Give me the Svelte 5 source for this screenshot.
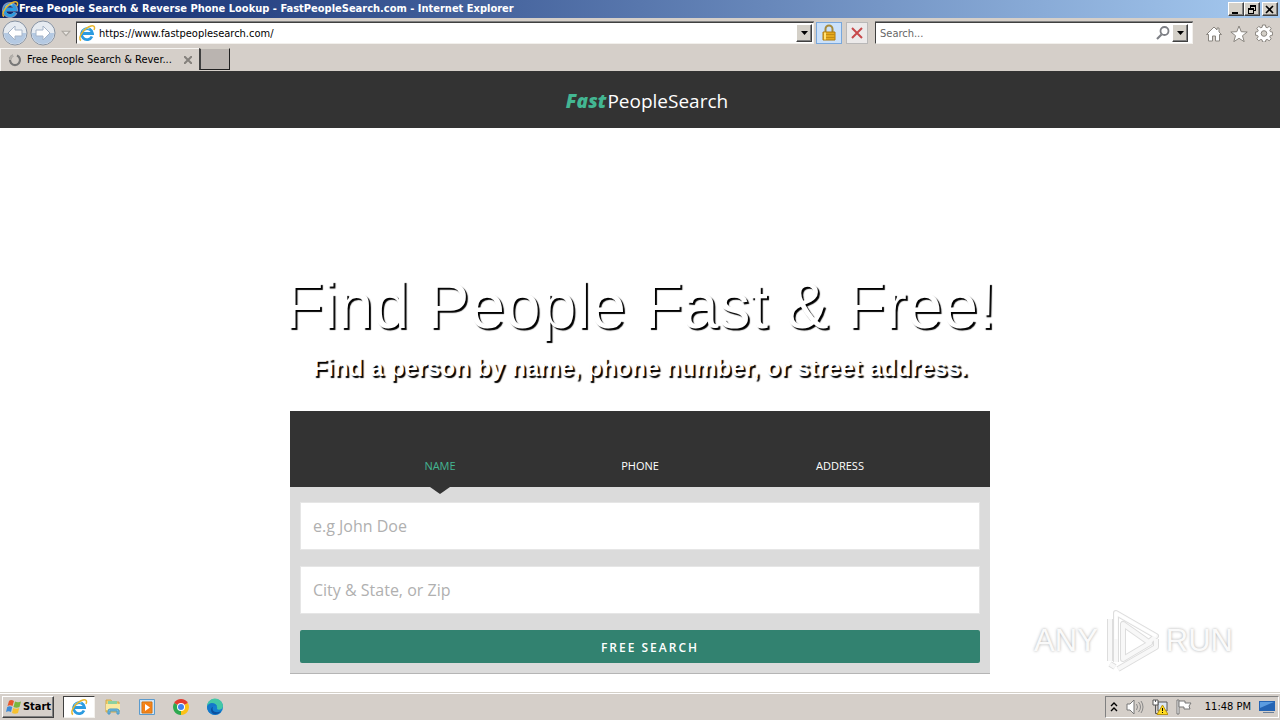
<script lang="ts">
    const tabs = ['Name', 'Phone', 'Address'];

    let active = $state('Name');
    let address = $state('https://www.fastpeoplesearch.com/');
    let query = $state('');
    let person = $state('');
    let place = $state('');
</script>

<svelte:head><title>Free People Search & Reverse Phone Lookup</title></svelte:head>

{#snippet ie()}
    <svg class="ie" viewBox="0 0 18 18" aria-hidden="true">
        <path d="M14.500 12.500A6 6 0 1 1 15 9.500H5" fill="none" stroke="#fff" stroke-width="4" opacity=".5" />
        <path d="M14 12.500A5.500 5.500 0 1 1 14.500 9.500H5" fill="none" stroke="#2b9be0" stroke-width="2.800" />
        <path d="M4.500 7.500a5 5 0 0 1 7-2.500" fill="none" stroke="#8fd6f8" stroke-width="1.200" />
        <path d="M3 16.500C-1 14 6 4 13 2c4-1 4 2 3 4" fill="none" stroke="#e8b62c" stroke-width="1.500" />
    </svg>
{/snippet}

{#snippet arrow()}
    <svg viewBox="0 0 9 5" width="9" height="5" aria-hidden="true"><path d="M1 0h7L4.500 4z" fill="#000" /></svg>
{/snippet}

<div class="desktop">
    <div class="titlebar">
        {@render ie()}
        <span class="title">Free People Search & Reverse Phone Lookup - FastPeopleSearch.com - Internet Explorer</span>
        <div class="window-buttons">
            <button aria-label="Minimize"><svg viewBox="0 0 10 9"><path d="M1 7h6v2H1z" /></svg></button>
            <button aria-label="Restore"><svg viewBox="0 0 10 9"><path d="M3 0h6v6H7V5h1V2H4v1H3zM1 3h6v6H1zm1 2v3h4V5z" fill-rule="evenodd" /></svg></button>
            <button class="close" aria-label="Close"><svg viewBox="0 0 10 9"><path d="M1 1l7 7M8 1L1 8" stroke="#000" stroke-width="1.600" /></svg></button>
        </div>
    </div>

    <div class="navbar">
        <div class="history">
            <button aria-label="Back">
                <svg viewBox="0 0 26 26"><circle cx="13" cy="13" r="12" fill="#e6ebf1" stroke="#8793a3" /><path d="M2 13a11 11 0 0 0 22 0z" fill="#b4c9e2" /><path d="M6 13l7-7v4h7v6h-7v4z" fill="#fff" stroke="#a5b4c8" /></svg>
            </button>
            <button aria-label="Forward">
                <svg viewBox="0 0 26 26"><circle cx="13" cy="13" r="12" fill="#e6ebf1" stroke="#8793a3" /><path d="M2 13a11 11 0 0 0 22 0z" fill="#b4c9e2" /><path d="M20 13l-7-7v4H6v6h7v4z" fill="#fff" stroke="#a5b4c8" /></svg>
            </button>
            <button class="recent" aria-label="Recent pages">
                <svg viewBox="0 0 9 6"><path d="M1 1h7L4.500 5z" fill="#e9e6e2" stroke="#aaa6a0" /></svg>
            </button>
        </div>
        <div class="field address">
            {@render ie()}
            <input type="text" aria-label="Address" bind:value={address} />
            <button class="drop" aria-label="Show address list">{@render arrow()}</button>
        </div>
        <button class="tool lock" aria-label="Security report">
            <svg viewBox="0 0 16 18" width="16" height="18"><path d="M4.500 9V5a3.500 3.500 0 0 1 7 0v4" fill="none" stroke="#a58a3c" stroke-width="2" /><path d="M2 8h12v8H2z" fill="#e5a91d" stroke="#b17b0d" /><path d="M2 10.500h12M2 13.500h12" stroke="#c48c12" /><path d="M4 8.500v7" stroke="#ffe177" stroke-width="2" /></svg>
        </button>
        <button class="tool" aria-label="Stop">
            <svg viewBox="0 0 12 12" width="12" height="12"><path d="M1 1l10 10M11 1L1 11" stroke="#c7494b" stroke-width="2" /></svg>
        </button>
        <div class="field search">
            <input type="text" aria-label="Search" placeholder="Search..." bind:value={query} />
            <svg viewBox="0 0 14 14" width="14" height="14" aria-hidden="true"><circle cx="8.500" cy="5" r="4" fill="none" stroke="#7d7f85" stroke-width="1.800" /><path d="M5.500 8.500L1 13" stroke="#7d7f85" stroke-width="2.200" /></svg>
            <button class="drop" aria-label="Search options">{@render arrow()}</button>
        </div>
        <div class="commands">
            <button aria-label="Home">
                <svg viewBox="0 0 18 18"><path d="M9 3L1.500 10.500h2V17h4v-5h3v5h4v-6.500h2L14 8V4h-2v2z" /></svg>
            </button>
            <button aria-label="Favorites">
                <svg viewBox="0 0 18 18"><path d="M9 2l2.200 5.700 6 .3-4.700 3.700 1.700 6L9 14.300l-5.200 3.400 1.700-6L.8 8l6-.3z" /></svg>
            </button>
            <button aria-label="Tools">
                <svg viewBox="0 0 18 18"><path d="M7.500 1h3l.4 2.300 1.300.5 2-1.400 2 2-1.400 2 .6 1.300 2.200.4v3l-2.200.4-.6 1.300 1.400 2-2 2-2-1.400-1.300.5-.4 2.100h-3l-.4-2.100-1.300-.5-2 1.400-2-2 1.400-2-.6-1.300L.4 11.100v-3l2.200-.4.6-1.300-1.400-2 2-2 2 1.400 1.300-.5z" /><circle cx="9" cy="9.500" r="2.800" fill="#d4d0c8" /></svg>
            </button>
        </div>
    </div>

    <div class="tabbar">
        <div class="tab">
            <svg viewBox="0 0 14 14" width="14" height="14" aria-hidden="true"><path d="M5 2.500A5 5 0 1 0 9 2.500" fill="none" stroke="#777" stroke-width="2.200" /><path d="M2 7a5 5 0 0 1 3-4.500" fill="none" stroke="#b5b1ac" stroke-width="2.200" /></svg>
            <span>Free People Search & Rever...</span>
            <button aria-label="Close tab"><svg viewBox="0 0 8 8" width="8" height="8"><path d="M0 0l8 8M8 0L0 8" stroke="#85817c" stroke-width="2" /></svg></button>
        </div>
        <button class="new-tab" aria-label="New tab"></button>
    </div>

    <header>
        <a class="brand" href="/"><em>Fast</em>PeopleSearch</a>
    </header>

    <main>
        <h1>Find People Fast & Free!</h1>
        <h2>Find a person by name, phone number, or street address.</h2>

        <form class="lookup" onsubmit={(e) => e.preventDefault()}>
            <nav>
                {#each tabs as tab (tab)}
                    <button type="button" class:active={active === tab} onclick={() => (active = tab)}>{tab}</button>
                {/each}
            </nav>
            <div class="fields">
                <input type="text" aria-label="Name" placeholder="e.g John Doe" bind:value={person} />
                <input type="text" aria-label="Location" placeholder="City & State, or Zip" bind:value={place} />
                <button type="submit">FREE SEARCH</button>
            </div>
        </form>

        <div class="watermark">
            <span>ANY</span>
            <svg viewBox="0 0 62 64" width="62" height="64" aria-hidden="true">
                <g fill="none" stroke-linejoin="round">
                    <path d="M15 53V4l40 23-7 6M9 10v42M9 55l5 3M17 60l38-22v-8M22 15v35l27-16z" stroke="#ddd" stroke-width="6" />
                    <path d="M15 53V4l40 23-7 6M9 10v42M9 55l5 3M17 60l38-22v-8M22 15v35l27-16z" stroke="#f8f8f8" stroke-width="4" />
                    <path d="M15 30V4l40 23" stroke="#fff" stroke-width="3" />
                </g>
            </svg>
            <span>RUN</span>
        </div>
    </main>

    <footer>
        <button class="start">
            <svg viewBox="0 0 18 16" width="18" height="16" aria-hidden="true"><path d="M4 2q2-2 5 0L7.500 7Q5 5.500 2.500 7z" fill="#e6572b" /><path d="M10 2.500q3 1.500 6 0L14.500 8q-3 1.500-6 0z" fill="#79b63d" /><path d="M2.200 8q2.500-1.500 5 0L6 13q-2.500-1.500-5 0z" fill="#3d8bd8" /><path d="M8.200 9q3 1.500 6 0L13 14q-3 1.500-6 0z" fill="#f6c12f" /></svg>
            Start
        </button>
        <div class="launch">
            <button class="running" aria-label="Internet Explorer">{@render ie()}</button>
            <button aria-label="Explorer">
                <svg viewBox="0 0 18 18"><path d="M2 2h5l1 2h7v10H2z" fill="#f1d06b" stroke="#d0a84a" /><path d="M4 3h9v4H4z" fill="#8bd0a0" /><path d="M2 6h14v6H2z" fill="#fae9a0" /><path d="M4 16v-3q0-2 2-2h7q2 0 2 2v3h-2v-3H6v3z" fill="#75bce0" stroke="#4998c5" /></svg>
            </button>
            <button aria-label="Media Player">
                <svg viewBox="0 0 18 18"><path d="M1.500 1.500h15v15h-15z" fill="#cfe5f6" stroke="#5b9bcd" /><path d="M4 4h10v11H4z" fill="#f28b20" stroke="#d7700e" /><circle cx="9" cy="9.500" r="4.500" fill="#f57e13" /><path d="M7 6v7l5-3.500z" fill="#fff" /></svg>
            </button>
            <button aria-label="Chrome">
                <svg viewBox="0 0 18 18"><path d="M9 9L2.100 5A8 8 0 0 1 15.900 5z" fill="#e33b2e" /><path d="M9 9l6.900-4A8 8 0 0 1 9 17z" fill="#fbc116" /><path d="M9 9v8A8 8 0 0 1 2.100 5z" fill="#2da94f" /><circle cx="9" cy="9" r="4" fill="#fff" /><circle cx="9" cy="9" r="3" fill="#4081ee" /></svg>
            </button>
            <button aria-label="Edge">
                <svg viewBox="0 0 18 18"><circle cx="9" cy="9" r="8" fill="#1480cf" /><path d="M1 9a8 8 0 0 1 16-1c0 3-4 5-6 3 1-3-2-6-5-5-3 0-5 2-5 3z" fill="#43c8a6" /><path d="M1 9c1-5 8-5 10-1-4-1-6 2-4 5s5 3 8 1A8 8 0 0 1 1 9z" fill="#1478ca" /><path d="M7 9c-2 4 3 7 8 4-3 5-10 4-10-1 0-2 1-3 2-3z" fill="#0c509f" /></svg>
            </button>
        </div>
        <div class="tray">
            <svg viewBox="0 0 8 10" width="8" height="10" aria-hidden="true"><path d="M1 4l3-3 3 3M1 9l3-3 3 3" fill="none" stroke="#000" stroke-width="1.400" /></svg>
            <svg viewBox="0 0 18 16" width="18" height="16" aria-hidden="true"><path d="M1 5h3l4-4v14l-4-4H1z" fill="#fff" stroke="#777" /><path d="M10.500 5q2 3 0 6M12.500 3q4 5 0 10M15 2q4 6 0 12" fill="none" stroke="#888" /></svg>
            <svg viewBox="0 0 16 16" width="16" height="16" aria-hidden="true"><path d="M6 3h9v9H6z" fill="#dce7f2" stroke="#555" /><path d="M1 1h5v5H1z" fill="#fff" stroke="#555" /><path d="M3.500 1v2M3.500 6v8.500H7" fill="none" stroke="#555" /><path d="M10.500 6L16 15.500H5z" fill="#ffdc20" stroke="#bb9310" /><path d="M10.500 9v3m0 1v1" stroke="#000" /></svg>
            <svg viewBox="0 0 16 16" width="16" height="16" aria-hidden="true"><path d="M1 1v14h2V1z" fill="#fff" stroke="#777" /><path d="M3 2h6v2h6l-2 3 1 3H8V8H3z" fill="#fff" stroke="#777" /></svg>
            <time>11:48 PM</time>
            <svg viewBox="0 0 16 16" width="16" height="16" aria-hidden="true"><path d="M0 2h16v10H0z" fill="#2464b4" /><path d="M1 3h14L1 9z" fill="#5b9ce0" /><path d="M4 13h11v1H4z" fill="#6b7f99" /></svg>
        </div>
    </footer>
</div>

<style>
    :global(body) { background: #fff; }
    .desktop { display: flex; flex-direction: column; min-height: 100vh; font: 11px/14px Tahoma, "DejaVu Sans Condensed", "DejaVu Sans", sans-serif; color: #000; }
    button, input { font: inherit; color: inherit; padding: 0; border: 0; background: none; box-sizing: border-box; }
    button { display: flex; align-items: center; justify-content: center; }
    input { min-width: 0; outline: 0; }
    svg { display: block; flex: none; }
    .ie { width: 18px; height: 18px; }

    .titlebar { display: flex; align-items: center; height: 18px; padding: 0 2px 0 1px; background: linear-gradient(90deg, #0a246a, #a6caf0); color: #fff; font-weight: bold; }
    .title { flex: 1; white-space: nowrap; overflow: hidden; }
    .window-buttons { display: flex; }
    .window-buttons button, .drop { width: 16px; height: 14px; background: #d4d0c8; border: 1px solid; border-color: #fff #404040 #404040 #fff; box-shadow: inset -1px -1px #808080; }
    .window-buttons svg { width: 10px; height: 9px; }
    .window-buttons .close { margin-left: 2px; }

    .navbar { display: flex; align-items: center; height: 30px; padding: 0 7px 0 2px; background: #d5cfc9; }
    .history { display: flex; align-items: center; gap: 2px; width: 74px; }
    .history svg { width: 26px; height: 26px; }
    .history .recent { margin-left: 3px; }
    .history .recent svg { width: 10px; height: 7px; }
    .field { display: flex; align-items: center; height: 22px; box-sizing: border-box; padding: 0 1px; background: #fff; border: 1px solid; border-color: #404040 #f2f0ec #f2f0ec #404040; box-shadow: 0 -1px #808080; }
    .address { flex: 1; gap: 3px; }
    .field input { flex: 1; height: 18px; }
    .field input::placeholder { color: #666; opacity: 1; }
    .field .drop { height: 18px; }
    .tool { width: 26px; height: 22px; border: 1px solid #b9b8b8; background: #eceaea; }
    .tool + .tool { width: 22px; margin: 0 7px 0 4px; }
    .lock { margin-left: 2px; border-color: #78a7dc; background: #cbe1fa; }
    .search { flex: 0 1 318px; padding: 0 4px; }
    .search .drop { margin: 0 0 0 2px; }
    .commands { display: flex; gap: 7px; margin-left: 12px; }
    .commands svg { width: 18px; height: 18px; fill: #fff; stroke: #89857f; }

    .tabbar { display: flex; height: 23px; background: #d5cfc9; }
    .tab { display: flex; align-items: center; gap: 5px; width: 199px; box-sizing: border-box; padding: 0 7px; border: 1px solid #f7f5f2; border-width: 1px 0 0 1px; }
    .tab span { flex: 1; white-space: nowrap; }
    .new-tab { width: 31px; height: 22px; background: #bab4b0; border: 1px solid; border-color: #d4d0c8 #202020 #202020 #404040; border-width: 1px 1px 1px 2px; }

    header { display: flex; align-items: center; justify-content: center; height: 57px; padding-top: 2px; box-sizing: border-box; background: #333; }
    .brand { color: #fff; font: 19px/28px "Segoe UI", "Open Sans", sans-serif; text-decoration: none; padding-left: 14px; }
    .brand em { color: #43b692; font-weight: 800; margin-right: 1px; }

    main { position: relative; flex: 1; padding: 141px 20px 19px; text-align: center; }
    h1, h2 { margin: 0; color: #fff; font-family: Arial, "Liberation Sans", sans-serif; text-shadow: 2px 2px 1px #000; }
    h1 { font-size: 64px; line-height: 74px; font-weight: normal; }
    h2 { font-size: 24px; line-height: 28px; margin: 11px 0 29px; }
    .lookup { max-width: 700px; margin: 0 auto; font-family: "Segoe UI", "Open Sans", sans-serif; }
    nav { display: flex; height: 76px; padding: 0 50px; background: #333; color: #fff; }
    nav button { position: relative; flex: 1; padding-top: 34px; font-size: 11px; text-transform: uppercase; }
    nav .active { color: #43b692; }
    nav .active::after { content: ""; position: absolute; top: 100%; left: 50%; margin-left: -10px; border: 10px solid transparent; border-width: 7px 10px 0; border-top-color: #333; }
    .fields { display: flex; flex-direction: column; gap: 16px; padding: 15px 10px 10px; background: #dbdbdb; border-bottom: 1px solid #b5b5b5; }
    .fields input { height: 48px; padding: 0 12px; background: #fff; border: 1px solid #e6e6e6; font-size: 16px; }
    .fields input::placeholder { color: #b0b0b0; opacity: 1; }
    .fields button { height: 33px; padding: 2px 0 0 20px; border-radius: 2px; background: #328270; color: #fff; font-size: 12px; font-weight: 600; letter-spacing: 2px; }
    .watermark { position: absolute; right: 47px; bottom: 20px; display: flex; align-items: center; gap: 3px; color: #fafafa; font: 31px/64px "Liberation Sans Narrow", "Liberation Sans", sans-serif; text-shadow: 0 0 3px #aaa; }

    footer { display: flex; align-items: center; height: 27px; box-sizing: border-box; padding: 0 1px 0 2px; background: #d5cfc9; border-top: 1px solid #fff; box-shadow: 0 -1px #d4d0c8; }
    .start { width: 52px; height: 22px; font-size: 11px; font-weight: bold; border: 1px solid; border-color: #fff #404040 #404040 #fff; box-shadow: inset -1px -1px #808080; }
    .launch { display: flex; margin-left: 9px; gap: 2px; }
    .launch button { width: 32px; height: 22px; }
    .launch svg { width: 18px; height: 18px; }
    .launch .running { background: #fff; border: 1px solid; border-color: #404040 #f4f2ee #f4f2ee #404040; }
    .tray { display: flex; align-items: center; gap: 8px; height: 22px; margin-left: auto; box-sizing: border-box; padding: 0 3px 0 4px; border: 1px solid; border-color: #808080 #fff #fff #808080; }
    .tray time { margin-left: 5px; white-space: nowrap; }
</style>
